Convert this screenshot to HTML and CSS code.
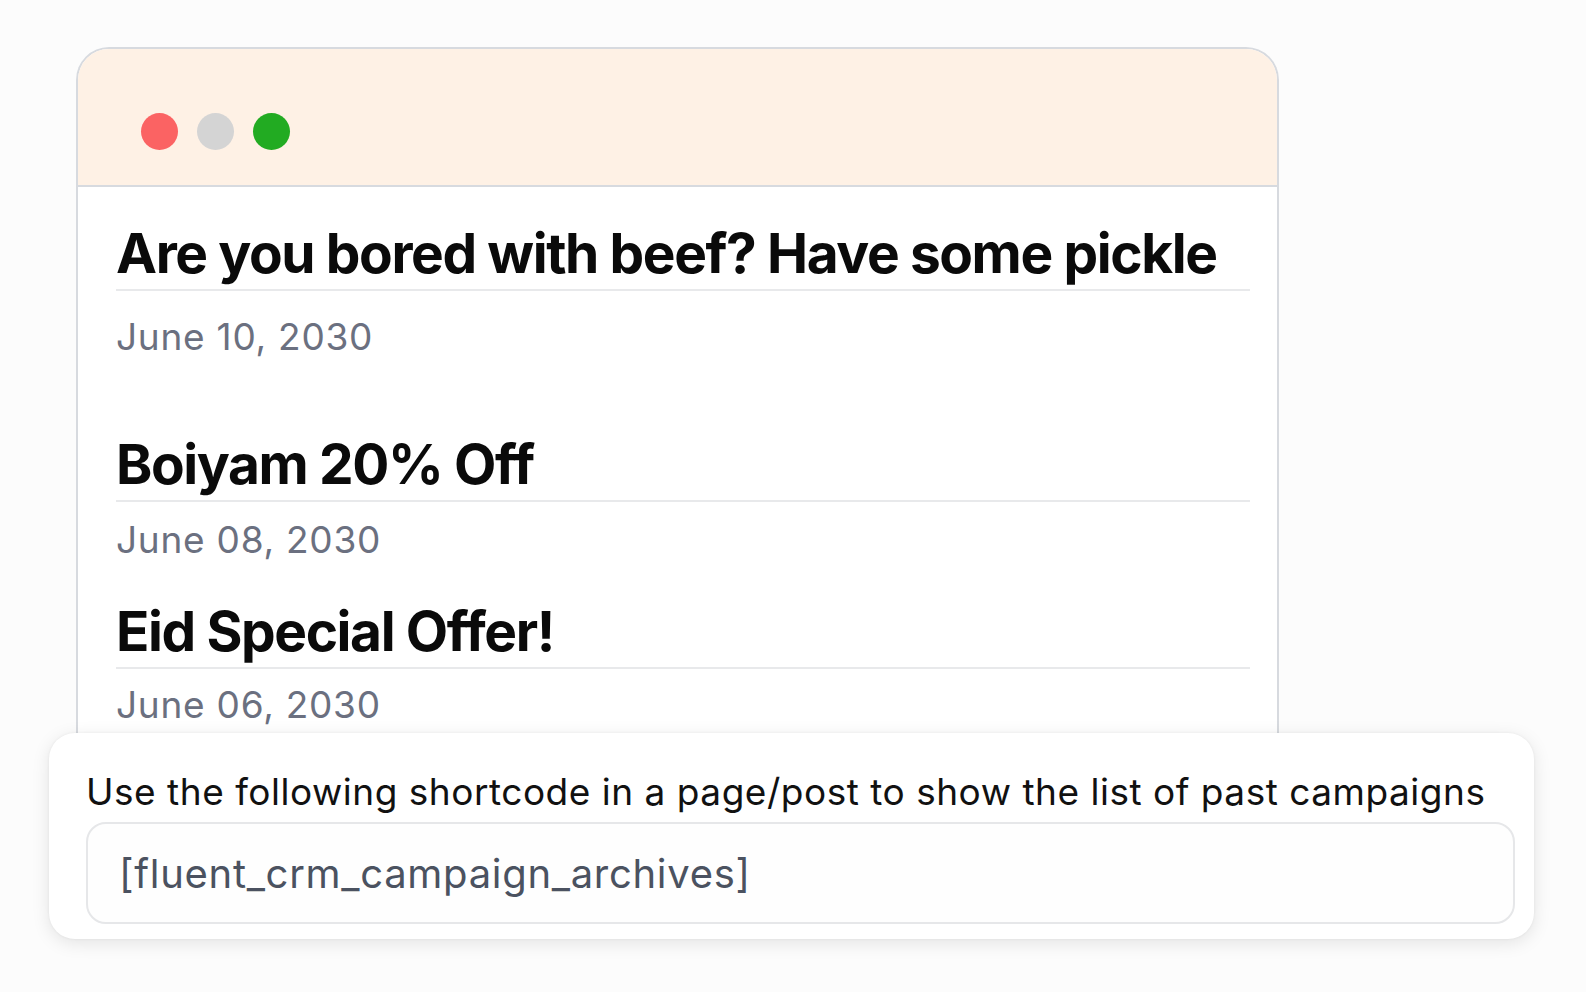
FILE: index.html
```html
<!DOCTYPE html>
<html lang="en">
<head>
<meta charset="utf-8">
<title>Campaign archives</title>
<link rel="stylesheet" href="styles.css">
</head>
<body>
<main class="page">
  <section class="window">
    <header class="window-bar">
      <span class="dot dot-red"></span>
      <span class="dot dot-gray"></span>
      <span class="dot dot-green"></span>
    </header>
    <div class="window-body">
      <article class="post post-first">
        <h2 class="post-title">Are you bored with beef? Have some pickle</h2>
        <p class="post-date">June 10, 2030</p>
      </article>
      <article class="post post-second">
        <h2 class="post-title">Boiyam 20% Off</h2>
        <p class="post-date">June 08, 2030</p>
      </article>
      <article class="post post-third">
        <h2 class="post-title">Eid Special Offer!</h2>
        <p class="post-date">June 06, 2030</p>
      </article>
    </div>
  </section>
  <section class="shortcode-card">
    <p class="shortcode-label">Use the following shortcode in a page/post to show the list of past campaigns</p>
    <div class="shortcode-box">[fluent_crm_campaign_archives]</div>
  </section>
</main>
</body>
</html>
```

FILE: styles.css
```css
* { box-sizing: border-box; }

html, body {
  margin: 0;
  padding: 0;
  background: #fcfcfc;
}

body {
  font-family: Inter, "Noto Sans", "Liberation Sans", sans-serif;
  width: 1586px;
  height: 992px;
  overflow: hidden;
}

.page {
  padding: 47px 0 0 0;
  display: flex;
  flex-direction: column;
}

.window {
  margin-left: 76px;
  width: 1203px;
  height: 686px;
  border: 2px solid #d7dadf;
  border-bottom: none;
  border-radius: 33px 33px 0 0;
  background: #ffffff;
  overflow: hidden;
}

.window-bar {
  height: 138px;
  background: #fef1e5;
  border-bottom: 2px solid #d7dadf;
  display: flex;
  align-items: flex-start;
  gap: 19px;
  padding: 64px 0 0 63px;
}

.dot {
  width: 37px;
  height: 37px;
  border-radius: 50%;
  flex: none;
}
.dot-red { background: #fb6363; }
.dot-gray { background: #d4d4d4; }
.dot-green { background: #22ab22; }

.window-body {
  padding: 34px 27px 0 38px;
}

.post-title {
  margin: 0;
  font-size: 55px;
  line-height: 64px;
  font-weight: 700;
  color: #0a0a0a;
  letter-spacing: -1.4px;
  padding-bottom: 4px;
  border-bottom: 2px solid #e8e9eb;
  white-space: nowrap;
}

.post-date {
  margin: 0;
  font-size: 37px;
  line-height: 44px;
  color: #6b7080;
  letter-spacing: 0.75px;
}

.post-first .post-date { margin-top: 24px; }
.post-second { margin-top: 73px; }
.post-second .post-date { margin-top: 16px; }
.post-third { margin-top: 37px; }
.post-third .post-date { margin-top: 14px; }

.shortcode-card {
  position: relative;
  z-index: 1;
  margin-left: 49px;
  width: 1485px;
  height: 206px;
  background: #ffffff;
  border-radius: 26px;
  box-shadow: 0 4px 18px rgba(0, 0, 0, 0.10), 0 0 3px rgba(0, 0, 0, 0.06);
  padding: 37px 19px 15px 37px;
  display: flex;
  flex-direction: column;
  gap: 8px;
}

.shortcode-label {
  margin: 0;
  font-size: 37px;
  line-height: 44px;
  color: #111111;
  letter-spacing: 0.52px;
  white-space: nowrap;
}

.shortcode-box {
  height: 102px;
  border: 2px solid #e6e7e9;
  border-radius: 20px;
  background: #fefefe;
  display: flex;
  align-items: center;
  padding: 0 0 0 31px;
  font-size: 40px;
  letter-spacing: 0.7px;
  color: #4b5260;
}
```
